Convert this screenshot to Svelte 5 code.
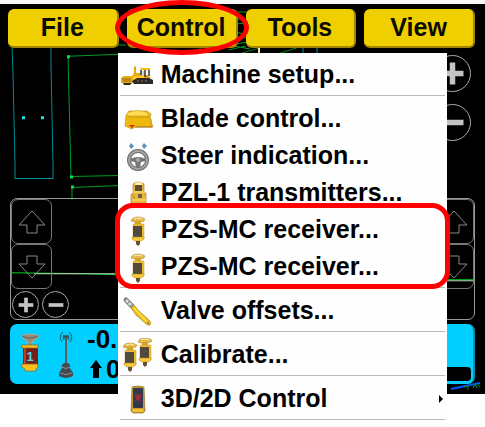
<script>
    const groups = [
        [{ label: 'Machine setup...', icon: 'paver' }],
        [
            { label: 'Blade control...', icon: 'blade' },
            { label: 'Steer indication...', icon: 'wheel' },
            { label: 'PZL-1 transmitters...', icon: 'transmitter' },
            { label: 'PZS-MC receiver...', icon: 'receiver', marked: true },
            { label: 'PZS-MC receiver...', icon: 'receiver', marked: true }
        ],
        [{ label: 'Valve offsets...', icon: 'valve' }],
        [{ label: 'Calibrate...', icon: 'calibrate' }],
        [{ label: '3D/2D Control', icon: 'mode', submenu: true }]
    ];
</script>

{#snippet receiver()}
    <path d="M11 8Q12 4 18 4Q22 4 25 6L24 8L20 9H14Z" fill="#e3b84a" stroke="#b8913a" stroke-width=".6" />
    <path d="M14 6Q18 4 22 6" stroke="#fff0ad" fill="none" />
    <rect x="15" y="8" width="6" height="5" fill="#d5a42d" />
    <rect x="13" y="11" width="11" height="15" rx="1" fill="#f0bd2e" stroke="#c99a28" stroke-width=".5" />
    <rect x="13" y="13" width="9" height="11" fill="#51493c" />
    <path d="M12 24H24V26L21 28H15L12 26Z" fill="#f7ca3c" stroke="#ad812a" stroke-width=".5" />
    <path d="M16 28H20V31L18 33L16 31Z" fill="#655232" />
{/snippet}

{#snippet icon(name)}
    <svg class="icon" viewBox="0 0 36 34" aria-hidden="true">
        {#if name === 'paver'}
            <path d="M1 20L4 18H12L14 15H20L21 17H28V23H13V25H1Z" fill="#e9ad12" />
            <path d="M14 9L16 8V15L20 16H14Z" fill="#e9a800" />
            <path d="M20 10H30V12H21Z" fill="#f4b90b" />
            <path d="M21 12V17M25 12V19M29 12V18" stroke="#383022" stroke-width="1.5" />
            <path d="M22 13H24V18H22Z" fill="#c8d2d7" />
            <path d="M12 23L17 20H29L33 22V26H14Z" fill="#292824" />
            <path d="M3 25H12L10 27H4Z" fill="#2d291d" />
            <path d="M17 23H29" stroke="#8d8065" stroke-dasharray="2 2" />
            <path d="M13 18H24V20H17L13 22Z" fill="#ffca24" />
            <path d="M2 21H11M3 23H11" stroke="#8b691d" />
            <path d="M27 17L31 20H25Z" fill="#df9e08" />
        {:else if name === 'blade'}
            <path d="M6 13L9 9H27L31 12L30 16L33 25H15L12 27L5 24Z" fill="#eeb80e" stroke="#b78b22" stroke-width=".6" />
            <path d="M9 10Q18 7 26 10L29 14H9L6 13Z" fill="#ffdc54" stroke="#c79a24" stroke-width=".5" />
            <path d="M8 15H29L31 17V24" fill="none" stroke="#d39a09" />
            <path d="M9 23H15L12 26Z" fill="#d52d12" />
            <path d="M15 25H32" stroke="#a67b16" />
        {:else if name === 'wheel'}
            <path d="M11 4L14 7L11 10L9 7ZM24 4L27 7L24 10L22 7Z" fill="#5993bd" />
            <circle cx="18" cy="21" r="9" fill="#fff" stroke="#6d6d6d" stroke-width="4" />
            <circle cx="18" cy="21" r="9" fill="none" stroke="#a5a5a5" stroke-width="2" />
            <path d="M10 20Q18 16 26 20V22L21 23L20 29H16L15 23L10 22Z" fill="#777" />
            <circle cx="18" cy="21" r="2" fill="#aaa" />
        {:else if name === 'transmitter'}
            <path d="M13 8Q18 4 24 8V17H26V31H11V18H13Z" fill="#e9b73a" stroke="#ac8336" stroke-width=".7" />
            <path d="M15 7Q19 5 22 7V9H15Z" fill="#fff0b0" />
            <rect x="15" y="9" width="7" height="6" fill="#5d4d3b" />
            <path d="M13 16H25M12 24H26" stroke="#ffe07a" />
            <rect x="18" y="18" width="4" height="4" fill="#6d603f" />
            <path d="M14 19V23" stroke="#aa7f20" />
            <path d="M11 27H26V32H11Z" fill="#888680" />
        {:else if name === 'receiver'}
            {@render receiver()}
        {:else if name === 'valve'}
            <path d="M6 6L12 12" stroke="#79817c" stroke-width="5" stroke-linecap="round" />
            <path d="M6 6L12 12" stroke="#d5dddd" stroke-width="3" stroke-dasharray="3 1" />
            <path d="M11 14L14 11L19 17L29 26Q32 29 30 31Q28 32 25 29L16 21Z" fill="#f0bd15" stroke="#a38433" stroke-width=".7" />
            <path d="M14 14L27 28" stroke="#ffdf58" stroke-width="1.5" />
            <circle cx="28" cy="29" r="1" fill="#987629" />
        {:else if name === 'calibrate'}
            <g transform="translate(-8 1)">{@render receiver()}</g>
            <g transform="translate(7 -4)">{@render receiver()}</g>
        {:else if name === 'mode'}
            <path d="M12 5Q18 3 24 5L25 29L23 31H13L11 29Z" fill="#c39a33" stroke="#8c7136" stroke-width=".7" />
            <rect x="13" y="6" width="10" height="20" rx="1" fill="#34384b" />
            <path d="M15 12L21 19M21 12L15 19M15 15H21M18 12V19" stroke="#d02236" />
            <path d="M12 27H24L23 30H13Z" fill="#f0bf32" />
        {/if}
    </svg>
{/snippet}

{#snippet arrows()}
    <div class="arrows">
        <button class="arrow" aria-label="Up">
            <svg viewBox="0 0 28 24"><path d="M14 1L27 15H19V23H9V15H1Z" /></svg>
        </button>
        <button class="arrow" aria-label="Down">
            <svg viewBox="0 0 28 24"><path d="M14 23L27 9H19V1H9V9H1Z" /></svg>
        </button>
    </div>
{/snippet}

{#snippet round(sign, name)}
    <button class="round" aria-label={name}>
        <svg viewBox="0 0 24 24">
            <path d="M4 12H20" />
            {#if sign === '+'}<path d="M12 4V20" />{/if}
        </svg>
    </button>
{/snippet}

<div class="page">
    <main class="screen">
        <!-- Wireframe view behind the controls -->
        <svg class="wireframe" viewBox="0 0 485 389" preserveAspectRatio="none" aria-hidden="true">
            <g fill="none" stroke="#008f98">
                <path d="M12 42L13 70L15 160V174H53V160L51 60V42M200 42V50M303 42V50M317 42V50" />
            </g>
            <path d="M22 112H25V115H22ZM41 112H44V115H41Z" fill="#19e5ee" />
            <g fill="none" stroke="#009b28">
                <path d="M68 52L120 50M68 52L71 172L120 171M72 183L120 181M72 183V195" />
                <path d="M112 41H126M228 46L246 42M228 8H248M235 14L248 17M235 20L248 19M235 28L248 31M235 36L248 33M235 40L248 38M242 49L262 43M280 49L302 42M234 42L250 45" />
            </g>
            <path d="M67 51H70V54H67ZM70 171H73V174H70ZM71 181H74V184H71Z" fill="#00e044" />
            <path d="M259 42V50" stroke="#f5edaf" stroke-width="2" />
            <path d="M10 268L88 269L120 270M445 275H474" fill="none" stroke="#00d51e" />
            <path d="M34 269H120M445 276H474" stroke="#b9d7b9" />
            <path d="M451 384L480 378" stroke="#0059ff" stroke-width="2" />
            <path d="M464 382L468 381V385M473 383L475 379L477 383M478 380L480 382" fill="none" stroke="#10901f" />
        </svg>

        <nav class="menubar">
            <button class="tab">File</button>
            <div class="dropdown">
                <button class="tab" aria-haspopup="menu" aria-expanded="true">Control</button>
                <div class="menu" role="menu">
                    {#each groups as group}
                        <div class="group">
                            {#each group as item}
                                <button class="item" role="menuitem">
                                    {@render icon(item.icon)}
                                    <span>{item.label}</span>
                                    {#if item.submenu}
                                        <svg class="submenu" viewBox="0 0 4 8" aria-hidden="true"><path d="M0 0L4 4L0 8Z" /></svg>
                                    {/if}
                                </button>
                            {/each}
                            {#if group.some((item) => item.marked)}
                                <div class="highlight"></div>
                            {/if}
                        </div>
                    {/each}
                </div>
            </div>
            <button class="tab">Tools</button>
            <button class="tab">View</button>
        </nav>

        <div class="zoom">
            {@render round('+', 'Zoom in')}
            {@render round('-', 'Zoom out')}
        </div>

        <section class="panel">
            <div class="panel-row">
                {@render arrows()}
                {@render arrows()}
            </div>
            <div class="steps">
                {@render round('+', 'Increase')}
                {@render round('-', 'Decrease')}
            </div>
        </section>

        <section class="status">
            <svg class="sensor" viewBox="0 0 20 42">
                <path d="M1 3Q3 1 10 1Q17 1 19 3L15 7L12 9V13H8V9L5 7Z" fill="#9b8d7b" stroke="#c8b795" stroke-width=".6" />
                <path d="M2 3Q10 7 18 3" fill="none" stroke="#5f6263" />
                <rect x="3" y="12" width="15" height="20" fill="#742019" />
                <path d="M5 14V31" stroke="#bc4023" stroke-width="2" />
                <path d="M2 12H18V15H2ZM2 31H18V34L16 36V38H5V36L2 34Z" fill="#ffc01c" stroke="#7d6b22" stroke-width=".7" />
                <text x="10" y="28">1</text>
            </svg>
            <svg class="antenna" viewBox="0 0 16 50">
                <path d="M5 3Q0 7 4 13M11 3Q16 7 12 13M6 6Q4 8 6 11M10 6Q12 8 10 11" fill="none" stroke="#235163" />
                <circle cx="8" cy="8" r="2" fill="#444" />
                <path d="M8 8V39" stroke="#555b60" stroke-width="2" />
                <path d="M4 36L6 34H10L12 36V39L15 44V47Q8 51 1 47V44L4 39Z" fill="#444a4d" />
                <path d="M4 38Q8 41 12 38M2 44Q8 47 14 44" fill="none" stroke="#899094" />
            </svg>
            <div class="readout">
                <div>-0.</div>
                <div class="lift">
                    <svg viewBox="0 0 12 18"><path d="M6 0L12 8H9V18H3V8H0Z" /></svg>
                    <span>0</span>
                </div>
            </div>
            <div class="gauge"></div>
        </section>
    </main>
</div>

<style>
    :global(body) {
        background: #fff;
    }

    .page {
        min-height: 100vh;
    }

    .page :global(*) {
        box-sizing: border-box;
    }

    .screen {
        position: relative;
        padding: 5px 10px 10px;
        border-top: 4px solid #f8f8f8;
        background: #000;
        font-family: 'Liberation Sans', Arial, sans-serif;
    }

    button {
        margin: 0;
        padding: 0;
        border: none;
        background: none;
        font: inherit;
        cursor: pointer;
    }

    svg {
        display: block;
        flex: none;
    }

    .wireframe {
        position: absolute;
        inset: 0;
        width: 100%;
        height: 100%;
    }

    /* Menu bar */
    .menubar {
        position: relative;
        z-index: 2;
        display: grid;
        grid-template-columns: repeat(4, 1fr);
        gap: 8px;
        margin-left: -2px;
    }

    .tab {
        width: 100%;
        height: 39px;
        border-right: 2px solid #a18400;
        border-bottom: 2px solid #a18400;
        border-radius: 6px;
        background: #efcf00;
        color: #0b0b00;
        font-size: 25px;
        font-weight: bold;
        line-height: 37px;
    }

    .dropdown {
        position: relative;
        z-index: 1;
    }

    /* Ring round the open tab */
    .dropdown::after {
        content: '';
        position: absolute;
        inset: -9px -11px -7px -12px;
        border: 5px solid #f00;
        border-radius: 50%;
        pointer-events: none;
    }

    /* Drop-down menu */
    .menu {
        position: absolute;
        top: 44px;
        left: -9px;
        width: max-content;
        padding: 3px 2px 8px;
        background: #fefefe;
    }

    .group {
        position: relative;
        padding-bottom: 2px;
        border-bottom: 1px solid #bdb8ad;
    }

    .group + .group {
        padding-top: 4px;
    }

    .item {
        display: flex;
        align-items: center;
        gap: 5px;
        width: 100%;
        height: 37px;
        padding-right: 43px;
        color: #000;
        font-size: 25px;
        font-weight: bold;
        text-align: left;
        white-space: nowrap;
    }

    .item:has(.submenu) {
        padding-right: 2px;
    }

    .icon {
        width: 36px;
        height: 34px;
    }

    .submenu {
        width: 4px;
        height: 8px;
        margin-left: auto;
    }

    .highlight {
        position: absolute;
        right: -5px;
        bottom: -2px;
        left: -5px;
        height: 86px;
        border: 5px solid #f00;
        border-radius: 18px;
        pointer-events: none;
    }

    /* Round plus and minus buttons */
    .round {
        display: grid;
        place-items: center;
        width: 27px;
        height: 27px;
        border: 1px solid #aaa;
        border-radius: 50%;
    }

    .round svg {
        width: 22px;
        height: 22px;
    }

    .round path {
        stroke: #c4c4c4;
        stroke-width: 4;
    }

    .zoom {
        position: relative;
        display: flex;
        flex-direction: column;
        align-items: flex-end;
        gap: 12px;
        padding: 7px 4px 57px;
    }

    .zoom .round {
        width: 37px;
        height: 37px;
    }

    .zoom .round svg {
        width: 33px;
        height: 33px;
    }

    /* Side panel */
    .panel {
        position: relative;
        padding-bottom: 1px;
        border: 1px solid #999;
        border-radius: 7px;
    }

    .panel-row {
        display: flex;
        justify-content: space-between;
    }

    .arrow {
        display: grid;
        place-items: center;
        width: 41px;
        height: 45px;
        border: 1px solid #777;
        border-radius: 7px;
    }

    .arrow svg {
        width: 28px;
        height: 24px;
    }

    .arrow path {
        fill: none;
        stroke: #888;
    }

    .steps {
        display: flex;
        gap: 3px;
        padding: 2px 1px 0;
    }

    /* Status bar */
    .status {
        position: relative;
        display: flex;
        align-items: center;
        margin-top: 4px;
        padding-left: 10px;
        border-right: 2px solid #008fae;
        border-radius: 7px;
        background: #00cfff;
    }

    .sensor {
        width: 20px;
        height: 42px;
    }

    .sensor text {
        fill: #58d5ed;
        font-size: 13px;
        font-weight: bold;
        text-anchor: middle;
    }

    .antenna {
        width: 16px;
        height: 50px;
        margin: 0 13px 0 18px;
    }

    .readout {
        font-size: 26px;
        font-weight: bold;
        line-height: 30px;
    }

    .lift {
        display: flex;
        align-items: center;
        gap: 4px;
        padding-left: 3px;
    }

    .lift svg {
        width: 12px;
        height: 18px;
    }

    .gauge {
        flex: 1;
        align-self: flex-end;
        height: 14px;
        margin: 0 2px 3px 24px;
        border-radius: 4px;
        background: #000;
    }
</style>
